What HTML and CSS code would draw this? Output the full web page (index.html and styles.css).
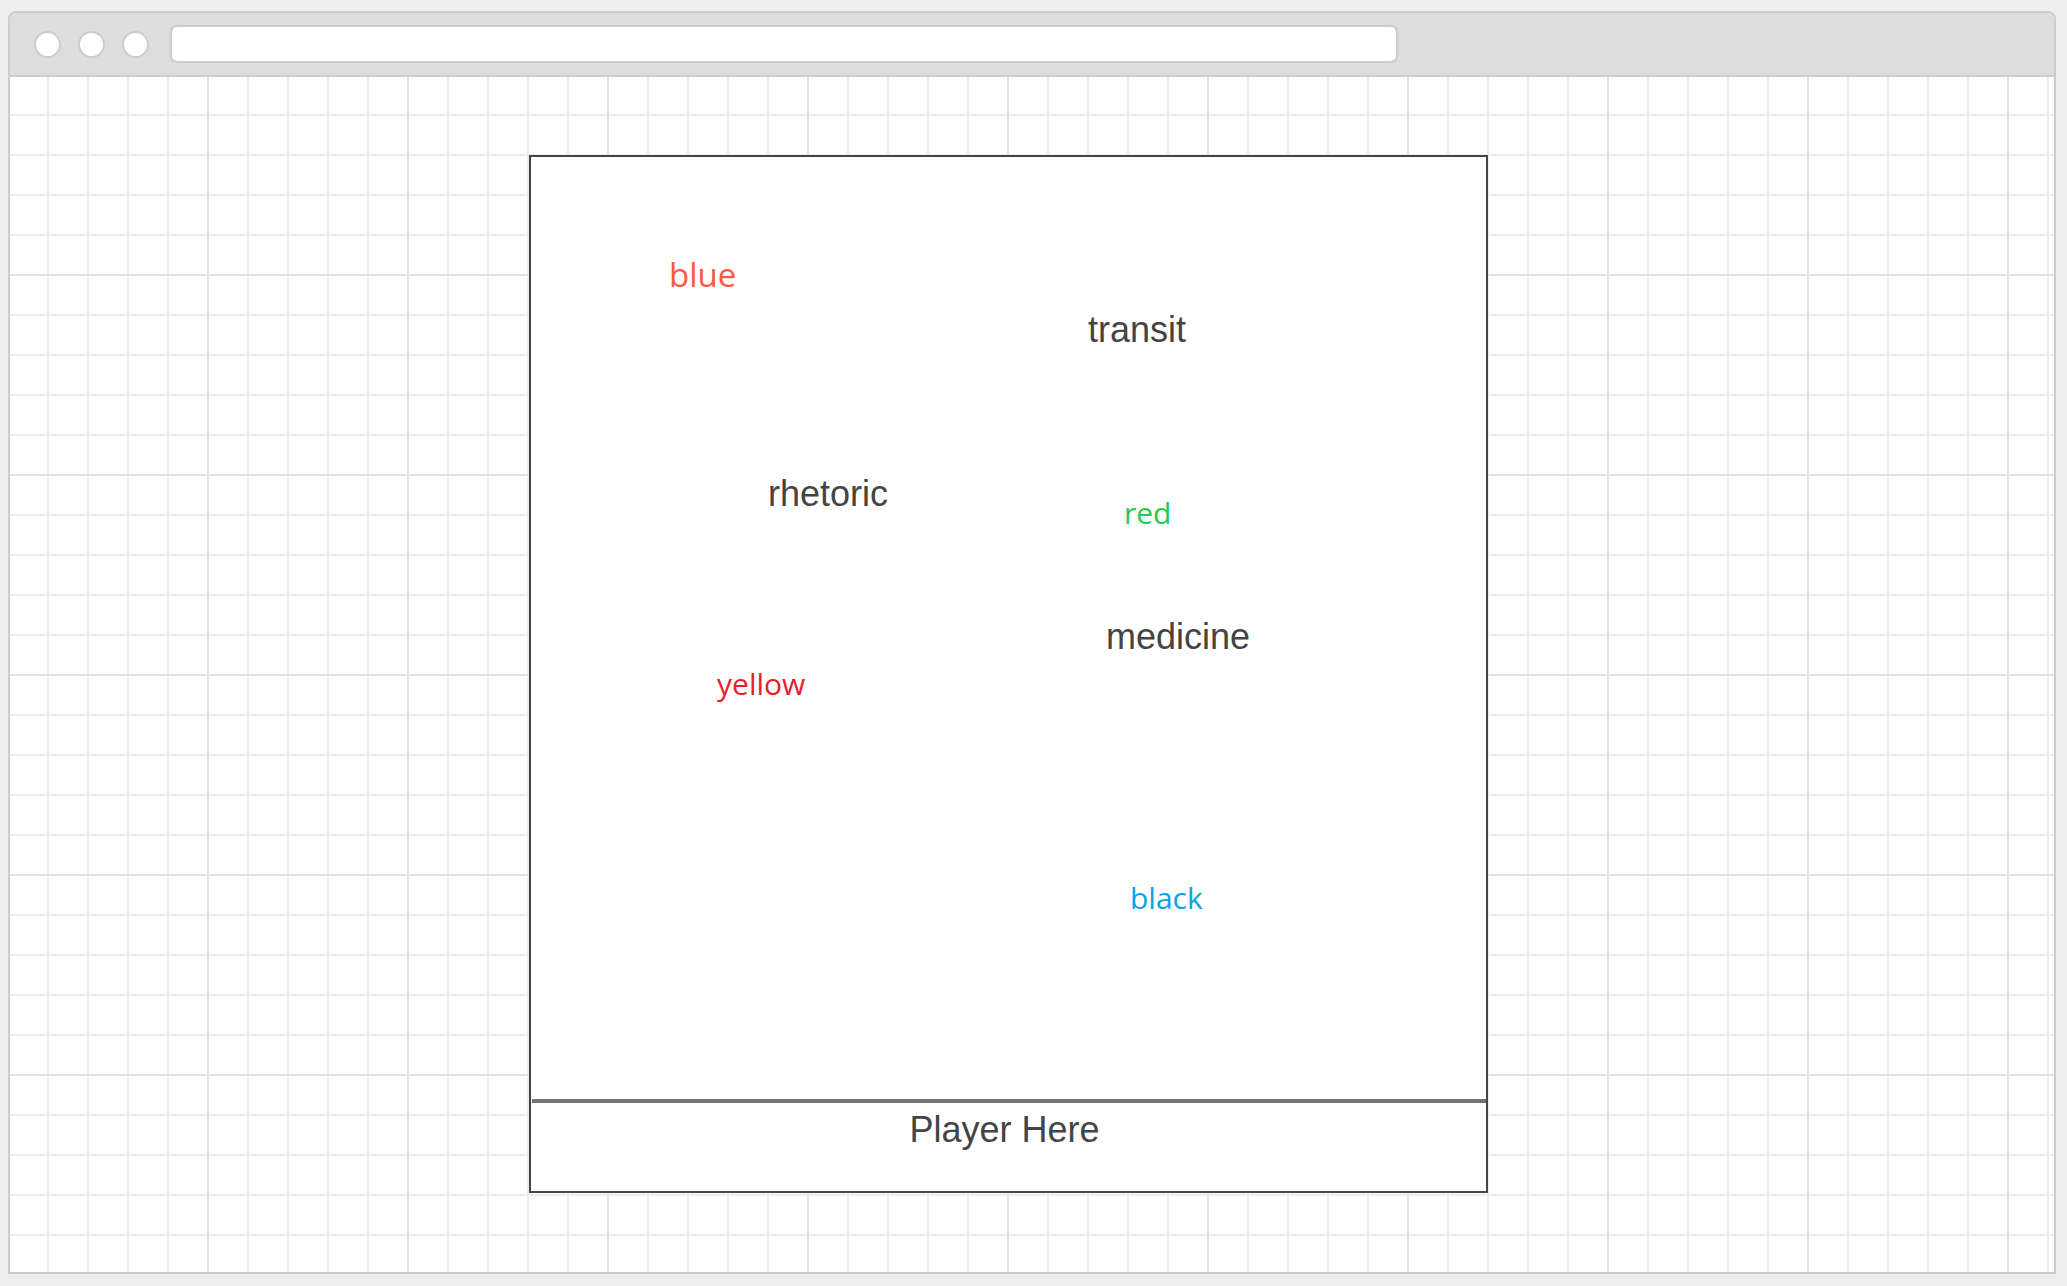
FILE: index.html
```html
<!DOCTYPE html>
<html lang="en">
<head>
<meta charset="utf-8">
<title>Word Game</title>
<link rel="stylesheet" href="styles.css">
</head>
<body>
<div class="window">
  <div class="topbar">
    <div class="dots">
      <span class="dot"></span>
      <span class="dot"></span>
      <span class="dot"></span>
    </div>
    <div class="address"></div>
  </div>
  <div class="content">
    <div class="game">
      <div class="field">
        <span class="word colored big c-blue" style="left:138px;top:98px">blue</span>
        <span class="word plain" style="left:557px;top:153px">transit</span>
        <span class="word plain" style="left:237px;top:317px">rhetoric</span>
        <span class="word colored c-green" style="left:593px;top:336px">red</span>
        <span class="word plain" style="left:575px;top:460px">medicine</span>
        <span class="word colored c-red" style="left:186px;top:507px">yellow</span>
        <span class="word colored c-sky" style="left:599px;top:721px">black</span>
      </div>
      <div class="divider"></div>
      <div class="player">Player Here</div>
    </div>
  </div>
</div>
</body>
</html>
```

FILE: styles.css
```css
html, body {
  margin: 0;
  padding: 0;
}
body {
  background: #eeeeee;
  width: 2067px;
  height: 1286px;
  overflow: hidden;
  font-family: "Liberation Sans", Arial, sans-serif;
}
.window {
  margin: 11px 11px 0 8px;
  height: 1263px;
  box-sizing: border-box;
  border: 2px solid #cccccc;
  border-radius: 8px 8px 0 0;
  display: flex;
  flex-direction: column;
  overflow: hidden;
}
.topbar {
  height: 64px;
  box-sizing: border-box;
  flex: none;
  background: #dddddd;
  border-bottom: 2px solid #cccccc;
  display: flex;
  align-items: center;
  padding-left: 24px;
  gap: 21px;
}
.dots {
  display: flex;
  gap: 17px;
}
.dot {
  width: 27px;
  height: 27px;
  box-sizing: border-box;
  border-radius: 50%;
  background: #ffffff;
  border: 2px solid #cccccc;
}
.address {
  width: 1228px;
  height: 38px;
  box-sizing: border-box;
  background: #ffffff;
  border: 2px solid #cccccc;
  border-radius: 7px;
}
.content {
  flex: 1;
  background-color: #ffffff;
  background-image:
    linear-gradient(to right, #e2e2e2 0, #e2e2e2 2px, transparent 2px),
    linear-gradient(to bottom, #e2e2e2 0, #e2e2e2 2px, transparent 2px),
    linear-gradient(to right, #ececec 0, #ececec 2px, transparent 2px),
    linear-gradient(to bottom, #ececec 0, #ececec 2px, transparent 2px);
  background-size: 200px 200px, 200px 200px, 40px 40px, 40px 40px;
  background-position: 197px 197px, 197px 197px, 37px 37px, 37px 37px;
  padding-top: 78px;
  padding-left: 519px;
}
.game {
  width: 959px;
  height: 1038px;
  box-sizing: border-box;
  border: 2px solid #444444;
  background: #ffffff;
  display: flex;
  flex-direction: column;
}
.field {
  position: relative;
  height: 942px;
  flex: none;
}
.word {
  position: absolute;
  white-space: nowrap;
  line-height: 40px;
}
.plain {
  font-family: "Liberation Sans", Arial, sans-serif;
  font-size: 36px;
  color: #444444;
}
.colored {
  font-family: "Open Sans", "Noto Sans", sans-serif;
  font-size: 30px;
}
.colored.big {
  font-size: 33px;
}
.c-blue { color: #ff5846; }
.c-green { color: #1fcc50; }
.c-red { color: #e8202c; }
.c-sky { color: #0ba2ea; }
.divider {
  height: 4px;
  margin-left: 1px;
  background: #737373;
  flex: none;
}
.player {
  flex: 1;
  padding-top: 7px;
  padding-right: 8px;
  text-align: center;
  font-size: 36px;
  line-height: 40px;
  color: #444444;
}
```
